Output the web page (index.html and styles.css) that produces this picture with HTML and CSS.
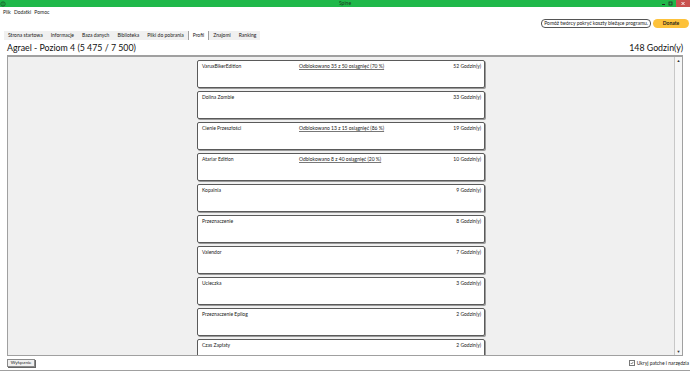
FILE: index.html
```html
<!DOCTYPE html>
<html lang="pl">
<head>
    <meta charset="UTF-8">
    <title>Spine</title>
    <link rel="stylesheet" href="styles.css">
</head>
<body>
<div class="titlebar">
    <div class="app-icon">
        <svg width="6" height="6" viewBox="0 0 6 6"><circle cx="3" cy="3" r="2.2" fill="none" stroke="#1b5e2b" stroke-width="0.8"/><path d="M3 1 L3 5" stroke="#1b5e2b" stroke-width="0.6"/></svg>
    </div>
    <div class="title">Spine</div>
    <div class="controls">
        <svg class="ctl" width="7" height="7" viewBox="0 0 7 7"><path d="M2 4.5 H5" stroke="#2a2a2a" stroke-width="1"/></svg>
        <svg class="ctl" width="7" height="7" viewBox="0 0 7 7"><rect x="2" y="2" width="3" height="3" fill="none" stroke="#2a2a2a" stroke-width="0.8"/></svg>
        <div class="close">
            <svg width="14" height="7" viewBox="0 0 14 7"><path d="M5.5 2 L8.5 5 M8.5 2 L5.5 5" stroke="#fff" stroke-width="0.9"/></svg>
        </div>
    </div>
</div>

<div class="menubar">
    <span>Plik</span>
    <span>Dodatki</span>
    <span>Pomoc</span>
</div>

<div class="topbar">
    <span class="support">Pomóż twórcy pokryć koszty bieżące programu.</span>
    <span class="donate">Donate</span>
</div>

<div class="tabbar">
    <div class="tabs">
        <span class="tab">Strona startowa</span>
        <span class="tab">Informacje</span>
        <span class="tab">Baza danych</span>
        <span class="tab">Biblioteka</span>
        <span class="tab">Pliki do pobrania</span>
        <span class="tab active">Profil</span>
        <span class="tab">Znajomi</span>
        <span class="tab">Ranking</span>
    </div>
</div>

<div class="header">
    <span>Agrael - Poziom 4 (5 475 / 7 500)</span>
    <span>148 Godzin(y)</span>
</div>

<div class="frame">
    <div class="games">
        <div class="card">
            <span class="name">VaruxBikerEdition</span>
            <span class="ach">Odblokowano 35 z 50 osiągnięć (70 %)</span>
            <span class="hours">52 Godzin(y)</span>
        </div>
        <div class="card">
            <span class="name">Dolina Zombie</span>
            <span class="ach"></span>
            <span class="hours">33 Godzin(y)</span>
        </div>
        <div class="card">
            <span class="name">Cienie Przeszłości</span>
            <span class="ach">Odblokowano 13 z 15 osiągnięć (86 %)</span>
            <span class="hours">19 Godzin(y)</span>
        </div>
        <div class="card">
            <span class="name">Atariar Edition</span>
            <span class="ach">Odblokowano 8 z 40 osiągnięć (20 %)</span>
            <span class="hours">10 Godzin(y)</span>
        </div>
        <div class="card">
            <span class="name">Kopalnia</span>
            <span class="ach"></span>
            <span class="hours">9 Godzin(y)</span>
        </div>
        <div class="card">
            <span class="name">Przeznaczenie</span>
            <span class="ach"></span>
            <span class="hours">8 Godzin(y)</span>
        </div>
        <div class="card">
            <span class="name">Valendor</span>
            <span class="ach"></span>
            <span class="hours">7 Godzin(y)</span>
        </div>
        <div class="card">
            <span class="name">Ucieczka</span>
            <span class="ach"></span>
            <span class="hours">3 Godzin(y)</span>
        </div>
        <div class="card">
            <span class="name">Przeznaczenie Epilog</span>
            <span class="ach"></span>
            <span class="hours">2 Godzin(y)</span>
        </div>
        <div class="card">
            <span class="name">Czas Zapłaty</span>
            <span class="ach"></span>
            <span class="hours">2 Godzin(y)</span>
        </div>
    </div>
    <div class="scrollbar">
        <span class="arrow">▲</span>
        <span class="arrow">▼</span>
    </div>
</div>

<div class="bottombar">
    <button class="btn">Wyłącznie</button>
    <div class="check">
        <span class="box">
            <svg width="4" height="4" viewBox="0 0 4 4"><path d="M0.7 2 L1.7 3 L3.3 0.9" fill="none" stroke="#333" stroke-width="0.6"/></svg>
        </span>
        <span>Ukryj patche i narzędzia</span>
    </div>
</div>
</body>
</html>
```

FILE: styles.css
```css
html, body {
    margin: 0;
    padding: 0;
}
body {
    width: 690px;
    height: 371px;
    overflow: hidden;
    background: #fff;
    font-family: Lato, "Open Sans", sans-serif;
    color: #1a1a1a;
}
.titlebar {
    height: 7px;
    background: #1fb84a;
    display: grid;
    grid-template-columns: 1fr auto 1fr;
    align-items: center;
}
.app-icon {
    display: flex;
}
.title {
    font-size: 5px;
    line-height: 7px;
    color: #1d3a22;
}
.controls {
    display: flex;
    justify-content: flex-end;
    align-items: center;
    height: 7px;
}
.ctl {
    display: block;
}
.close {
    width: 14px;
    height: 7px;
    background: #c9514f;
    margin-left: 2px;
}
.close svg {
    display: block;
}
.menubar {
    height: 10px;
    display: flex;
    align-items: center;
    gap: 3px;
    padding-left: 3px;
    font-size: 5px;
}
.topbar {
    height: 13px;
    display: flex;
    justify-content: flex-end;
    align-items: center;
    gap: 2px;
    padding-right: 1px;
    font-size: 5px;
}
.support {
    border: 1px solid #555;
    border-radius: 4px;
    padding: 0 2px;
    height: 7px;
    line-height: 7px;
    background: #fff;
}
.donate {
    background: #fdc23b;
    border-radius: 5px;
    width: 36px;
    height: 9px;
    line-height: 9px;
    text-align: center;
    font-weight: 700;
}
.tabbar {
    height: 11px;
    display: flex;
    align-items: center;
    padding-left: 4px;
}
.tabs {
    height: 9px;
    display: flex;
    background: #f0f0f0;
    font-size: 5px;
}
.tab {
    padding: 0 4px;
    line-height: 9px;
}
.tab.active {
    background: #fff;
    border-left: 1px solid #a0a0a0;
    border-right: 1px solid #a0a0a0;
}
.header {
    height: 14px;
    display: flex;
    justify-content: space-between;
    align-items: center;
    padding: 0 7px;
    font-size: 8.8px;
    line-height: 14px;
    color: #111;
}
.frame {
    margin: 0 7px;
    height: 298px;
    border: 1px solid #a0a0a0;
    border-top: 2px solid #a0a0a0;
    background: #f0f0f0;
    display: flex;
    overflow: hidden;
}
.games {
    flex: 1;
    display: flex;
    flex-direction: column;
    align-items: center;
    gap: 3px;
    padding-top: 3px;
}
.card {
    width: 279px;
    height: 25px;
    flex: none;
    background: #fff;
    border: 1px solid #5a5a5a;
    border-radius: 2px;
    box-shadow: 1px 1px 0 #9a9a9a;
    padding: 1px 3px 0 4px;
    display: grid;
    grid-template-columns: 97px 1fr auto;
    align-items: start;
    font-size: 5px;
    line-height: 9px;
}
.ach {
    text-decoration: underline;
    text-decoration-color: #777;
}
.scrollbar {
    width: 7px;
    border-left: 1px solid #c8c8c8;
    background: #f6f6f6;
    display: flex;
    flex-direction: column;
    justify-content: space-between;
    align-items: center;
}
.arrow {
    font-size: 4px;
    line-height: 7px;
    color: #333;
}
.bottombar {
    height: 14px;
    border-bottom: 1px solid #a0a0a0;
    display: flex;
    justify-content: space-between;
    align-items: center;
    padding: 0 1px 0 7px;
}
.btn {
    font-family: Lato, sans-serif;
    font-size: 4.5px;
    height: 8px;
    width: 28px;
    padding: 0;
    margin: 0;
    background: #f0f0f0;
    border: 1px solid #8a8a8a;
    border-radius: 0;
    box-shadow: 1px 1px 0 #666;
    line-height: 6px;
    color: #1a1a1a;
}
.check {
    display: flex;
    align-items: center;
    gap: 2px;
    font-size: 5px;
}
.box {
    width: 4px;
    height: 4px;
    border: 1px solid #777;
    background: #fff;
    display: flex;
}
.box svg {
    display: block;
}
```
